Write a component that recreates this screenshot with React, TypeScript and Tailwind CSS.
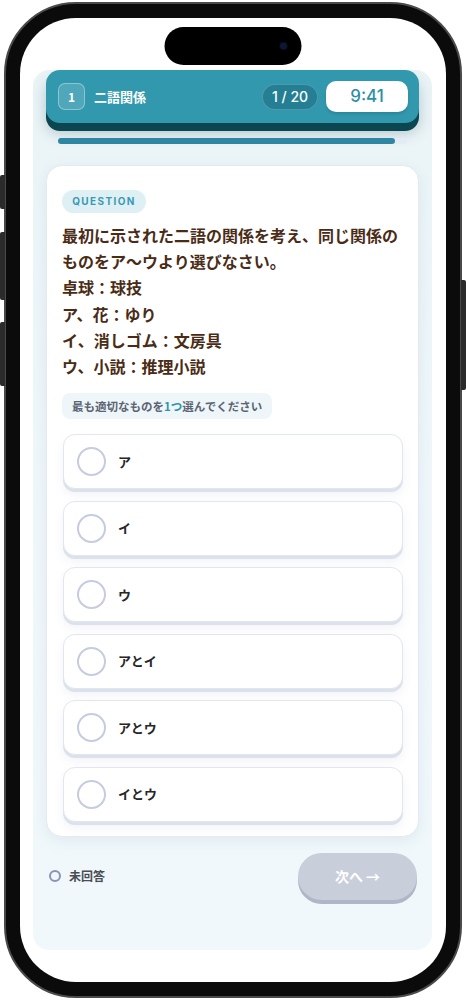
import React from "react";

const options = ["ア", "イ", "ウ", "アとイ", "アとウ", "イとウ"];

function Option({ label }: { label: string }) {
  return (
    <div className="flex h-[55px] items-center gap-[12px] rounded-[12px] border border-[#e2e6ef] bg-white pl-[13px] shadow-[0_3px_0_#dde1ec,0_6px_10px_rgba(180,190,210,0.18)]">
      <div className="h-[29px] w-[29px] rounded-full border-[2px] border-[#c6cce0] bg-white" />
      <span className="text-[13px] font-bold text-[#262626]">{label}</span>
    </div>
  );
}

export default function App() {
  return (
    <div className="relative h-[1000px] w-[466px] overflow-hidden bg-white font-['Noto_Sans_CJK_JP','Noto_Sans',sans-serif]">
      {/* side buttons */}
      <div className="absolute left-0 top-[175px] h-[34px] w-[5px] rounded-l-[2px] bg-[#2b2b2b]" />
      <div className="absolute left-0 top-[232px] h-[68px] w-[5px] rounded-l-[2px] bg-[#2b2b2b]" />
      <div className="absolute left-0 top-[322px] h-[64px] w-[5px] rounded-l-[2px] bg-[#2b2b2b]" />
      <div className="absolute right-0 top-[280px] h-[110px] w-[5px] rounded-r-[2px] bg-[#2b2b2b]" />

      <div className="mx-[4px] mt-[2px] h-[996px] rounded-[72px] border-[2px] border-[#4a4a4a] bg-[#0b0b0b] p-[14px]">
        <div className="relative flex h-full flex-col rounded-[56px] bg-white pl-[13px] pr-[14px] pt-[52px]">
          {/* dynamic island */}
          <div className="absolute left-1/2 top-[9px] flex h-[38px] w-[137px] -translate-x-1/2 items-center justify-end rounded-full bg-black pr-[15px]">
            <div className="h-[6px] w-[6px] rounded-full bg-[#0d1830] shadow-[0_0_2px_#1e3c78]" />
          </div>

          {/* panel */}
          <div className="flex h-[880px] flex-col rounded-[16px] bg-gradient-to-b from-[#eaf4f7] via-[#eff7fa] to-[#f0f8fb] px-[13px]">
            {/* header */}
            <div className="flex h-[53px] items-center rounded-[14px] bg-[#3298ad] pl-[12px] pr-[11px] shadow-[0_8px_0_#0c4651,0_10px_14px_rgba(10,60,70,0.25)]">
              <div className="flex h-[27px] w-[27px] items-center justify-center rounded-[7px] border border-white/35 bg-white/15 text-[12px] font-bold text-white">
                1
              </div>
              <span className="ml-[9px] text-[13px] font-bold text-white">二語関係</span>
              <div className="ml-auto flex h-[26px] w-[56px] items-center justify-center rounded-full border border-white/20 bg-[#247f95] font-['Inter',sans-serif] text-[14px] font-medium text-white">
                1 / 20
              </div>
              <div className="ml-[8px] flex h-[31px] w-[82px] items-center justify-center rounded-[10px] bg-white font-['Inter',sans-serif] text-[17px] font-medium text-[#2e8ea6] shadow-[0_2px_3px_rgba(0,0,0,0.12)]">
                9:41
              </div>
            </div>

            {/* progress */}
            <div className="mx-[12px] mt-[15px] h-[6px] rounded-full bg-[#e3ebf4]">
              <div className="h-full w-[96.6%] rounded-full bg-[#2f86a2]" />
            </div>

            {/* card */}
            <div className="mt-[21px] rounded-[16px] border border-[#e4eaf0] bg-white px-[15px] pb-[14px] pt-[24px] shadow-[0_4px_14px_rgba(160,185,200,0.2)]">
              <div className="flex h-[23px] w-[84px] items-center justify-center rounded-full bg-[#dff0f5] font-['Inter',sans-serif] text-[10px] font-bold tracking-[0.14em] text-[#3a9ab2]">
                QUESTION
              </div>
              <div className="mt-[9px] text-[16px] font-bold leading-[26.2px] text-[#4a2c16]">
                <p>最初に示された二語の関係を考え、同じ関係のものをア〜ウより選びなさい。</p>
                <p>卓球：球技</p>
                <p>ア、花：ゆり</p>
                <p>イ、消しゴム：文房具</p>
                <p>ウ、小説：推理小説</p>
              </div>
              <div className="mt-[14px] flex h-[26px] w-fit items-center rounded-[8px] bg-[#eef6fa] px-[10px] text-[11.5px] font-bold text-[#5b6472]">
                最も適切なものを<span className="text-[#2f95b0]">1つ</span>選んでください
              </div>

              <div className="mt-[15px] flex flex-col gap-[11.5px] pl-[1px]">
                {options.map((o) => (
                  <Option key={o} label={o} />
                ))}
              </div>
            </div>

            {/* footer */}
            <div className="mt-[16px] flex items-center pl-[3px] pr-[2px]">
              <div className="h-[12px] w-[12px] rounded-full border-[2px] border-[#8a93b6]" />
              <span className="ml-[8px] text-[12px] font-bold text-[#4a4d55]">未回答</span>
              <div className="ml-auto flex h-[47px] w-[119px] items-center justify-center rounded-full bg-[#c9cedb] text-[14px] font-bold text-white shadow-[0_4px_0_#b0b6c5]">
                次へ →
              </div>
            </div>
          </div>
        </div>
      </div>
    </div>
  );
}
